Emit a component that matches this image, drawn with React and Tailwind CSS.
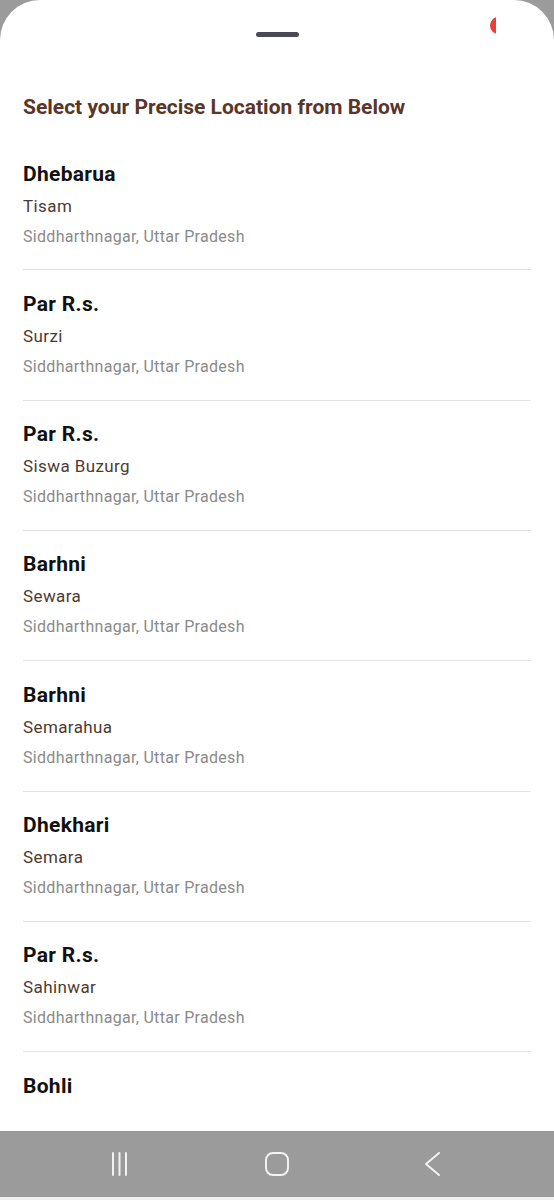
import React from "react";

const items = [
  ["Dhebarua", "Tisam"],
  ["Par R.s.", "Surzi"],
  ["Par R.s.", "Siswa Buzurg"],
  ["Barhni", "Sewara"],
  ["Barhni", "Semarahua"],
  ["Dhekhari", "Semara"],
  ["Par R.s.", "Sahinwar"],
];

export default function App() {
  return (
    <div className="w-[554px] h-[1200px] bg-[#9b9b9b] flex flex-col overflow-hidden" style={{ fontFamily: "Roboto, 'Noto Sans', sans-serif" }}>
      <div className="relative h-[1131px] bg-white rounded-t-[40px] overflow-hidden flex flex-col">
        <div className="absolute left-[490px] top-[17px] w-[6px] h-[17px] overflow-hidden">
          <div className="w-[17px] h-[17px] rounded-full bg-[#e8413a]"></div>
        </div>
        <div className="pt-[32px] flex justify-center">
          <div className="w-[43px] h-[5px] rounded-full bg-[#4a4a55]"></div>
        </div>
        <h1 className="mt-[56px] px-[23px] text-[21px] leading-[28px] font-bold text-[#5a3627]">
          Select your Precise Location from Below
        </h1>
        <div className="mt-[19px] px-[23px]">
          {items.map(([name, sub], i) => (
            <div key={i} className="pt-[19.5px] pb-[21.83px] border-b border-[#e2e2e2]">
              <div className="text-[21px] leading-[28px] font-bold text-[#111] tracking-[0.3px]">{name}</div>
              <div className="mt-[6px] text-[17px] leading-[24px] text-[#4e3a30] tracking-[0.4px]">{sub}</div>
              <div className="mt-[8px] text-[16px] leading-[22px] text-[#8a8a8a] tracking-[0.3px]">Siddharthnagar, Uttar Pradesh</div>
            </div>
          ))}
          <div className="pt-[19.5px]">
            <div className="text-[21px] leading-[28px] font-bold text-[#111] tracking-[0.3px]">Bohli</div>
          </div>
        </div>
      </div>
      <div className="h-[66px] bg-[#9b9b9b] flex items-center pl-[110px]">
        <svg width="20" height="26" viewBox="0 0 20 26">
          <g stroke="#f2f2f2" strokeWidth="2" strokeLinecap="round">
            <line x1="3" y1="2" x2="3" y2="24" />
            <line x1="9.5" y1="2" x2="9.5" y2="24" />
            <line x1="16" y1="2" x2="16" y2="24" />
          </g>
        </svg>
        <svg width="26" height="26" viewBox="0 0 26 26" className="ml-[134px]">
          <rect x="2" y="2" width="22" height="22" rx="7" fill="none" stroke="#f2f2f2" strokeWidth="2" />
        </svg>
        <svg width="20" height="26" viewBox="0 0 20 26" className="ml-[132px]">
          <polyline points="17,2 4,13 17,24" fill="none" stroke="#f2f2f2" strokeWidth="2" strokeLinecap="round" strokeLinejoin="round" />
        </svg>
      </div>
      <div className="flex-1 bg-[#eeeeee]"></div>
    </div>
  );
}
